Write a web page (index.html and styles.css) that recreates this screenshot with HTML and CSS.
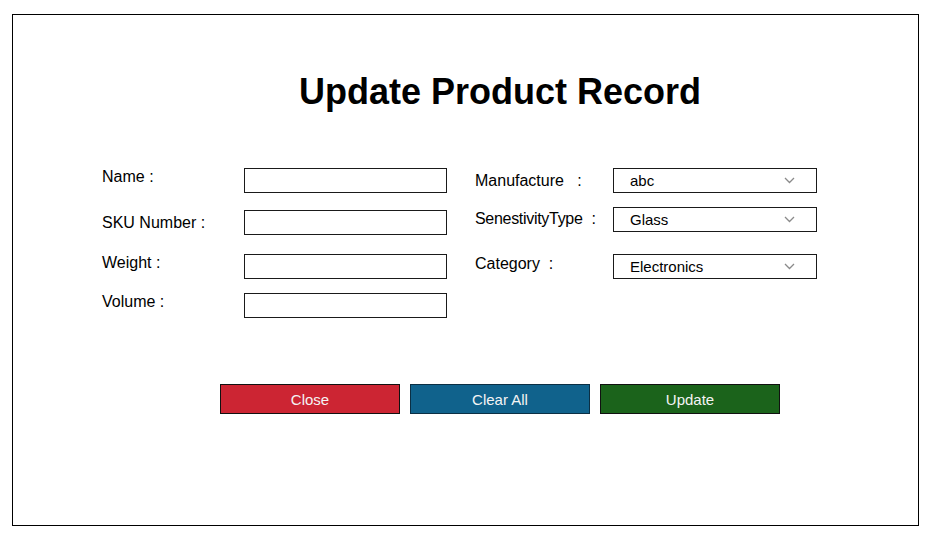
FILE: index.html
```html
<!DOCTYPE html>
<html lang="en">
<head>
<meta charset="utf-8">
<title>Update Product Record</title>
<link rel="stylesheet" href="styles.css">
</head>
<body>
<div class="frame">
  <h1 class="title">Update Product Record</h1>
  <div class="form">
    <div class="col-left">
      <label class="lbl">Name :</label>
      <input class="field" type="text">
      <label class="lbl lbl-sku">SKU Number :</label>
      <input class="field" type="text">
      <label class="lbl">Weight :</label>
      <input class="field" type="text">
      <label class="lbl">Volume :</label>
      <input class="field" type="text">
    </div>
    <div class="col-right">
      <label class="rlbl rlbl-man">Manufacture&nbsp;&nbsp;&nbsp;:</label>
      <div class="select"><span>abc</span><svg class="chev" width="11" height="7" viewBox="0 0 11 7"><polyline points="1,1 5.5,5.5 10,1" fill="none" stroke="#8a8a8a" stroke-width="1.3"/></svg></div>
      <label class="rlbl rlbl-sen"><span class="tight">SenestivityType</span>&nbsp;&nbsp;:</label>
      <div class="select"><span>Glass</span><svg class="chev" width="11" height="7" viewBox="0 0 11 7"><polyline points="1,1 5.5,5.5 10,1" fill="none" stroke="#8a8a8a" stroke-width="1.3"/></svg></div>
      <label class="rlbl rlbl-cat">Category&nbsp;&nbsp;:</label>
      <div class="select"><span>Electronics</span><svg class="chev" width="11" height="7" viewBox="0 0 11 7"><polyline points="1,1 5.5,5.5 10,1" fill="none" stroke="#8a8a8a" stroke-width="1.3"/></svg></div>
    </div>
  </div>
  <div class="actions">
    <button class="btn btn-close" type="button">Close</button>
    <button class="btn btn-clear" type="button">Clear All</button>
    <button class="btn btn-update" type="button">Update</button>
  </div>
</div>
</body>
</html>
```
FILE: styles.css
```css
* { box-sizing: border-box; }

html, body {
  margin: 0;
  padding: 0;
  background: #ffffff;
}

body {
  font-family: "Liberation Sans", Arial, sans-serif;
  color: #000;
  padding: 14px 0 0 12px;
}

.frame {
  width: 907px;
  height: 512px;
  border: 1px solid #000;
  padding-top: 56px;
}

.title {
  margin: 0;
  font-size: 36px;
  line-height: 42px;
  font-weight: bold;
  text-align: center;
  padding-left: 69px;
}

.form {
  display: flex;
  margin-top: 55px;
  padding-left: 89px;
  gap: 28px;
}

.col-left {
  display: grid;
  grid-template-columns: 142px 203px;
  grid-template-rows: 42px 44px 39px 25px;
  align-items: start;
}

.lbl {
  font-size: 16px;
  line-height: 18px;
  padding-top: 0;
}

.lbl-sku { padding-top: 4px; }

.field {
  width: 203px;
  height: 25px;
  margin: 0;
  padding: 0 4px;
  border: 1px solid #1a1a1a;
  background: #fff;
  font-family: inherit;
  font-size: 15px;
}

.col-right {
  display: grid;
  grid-template-columns: 138px 204px;
  grid-template-rows: 39px 47px 25px;
  align-items: start;
}

.rlbl {
  font-size: 16px;
  line-height: 18px;
}

.rlbl-man { padding-top: 4px; }
.rlbl-sen { padding-top: 3px; }
.rlbl-cat { padding-top: 1px; }

.tight { letter-spacing: -0.3px; }

.select {
  width: 204px;
  height: 25px;
  border: 1px solid #1a1a1a;
  display: flex;
  align-items: center;
  justify-content: space-between;
  padding: 0 21px 0 16px;
  font-size: 15px;
}

.chev { display: block; }

.actions {
  display: flex;
  gap: 10px;
  margin-top: 66px;
  padding-left: 207px;
}

.btn {
  width: 180px;
  height: 30px;
  margin: 0;
  padding: 0;
  border: 1px solid #111;
  font-family: "Liberation Sans", Arial, sans-serif;
  font-size: 15px;
  color: #f4f4f4;
  cursor: pointer;
}

.btn-close { background: #cc2533; }
.btn-clear { background: #10628c; border-color: #0b2f44; }
.btn-update { background: #1b631b; }
```
